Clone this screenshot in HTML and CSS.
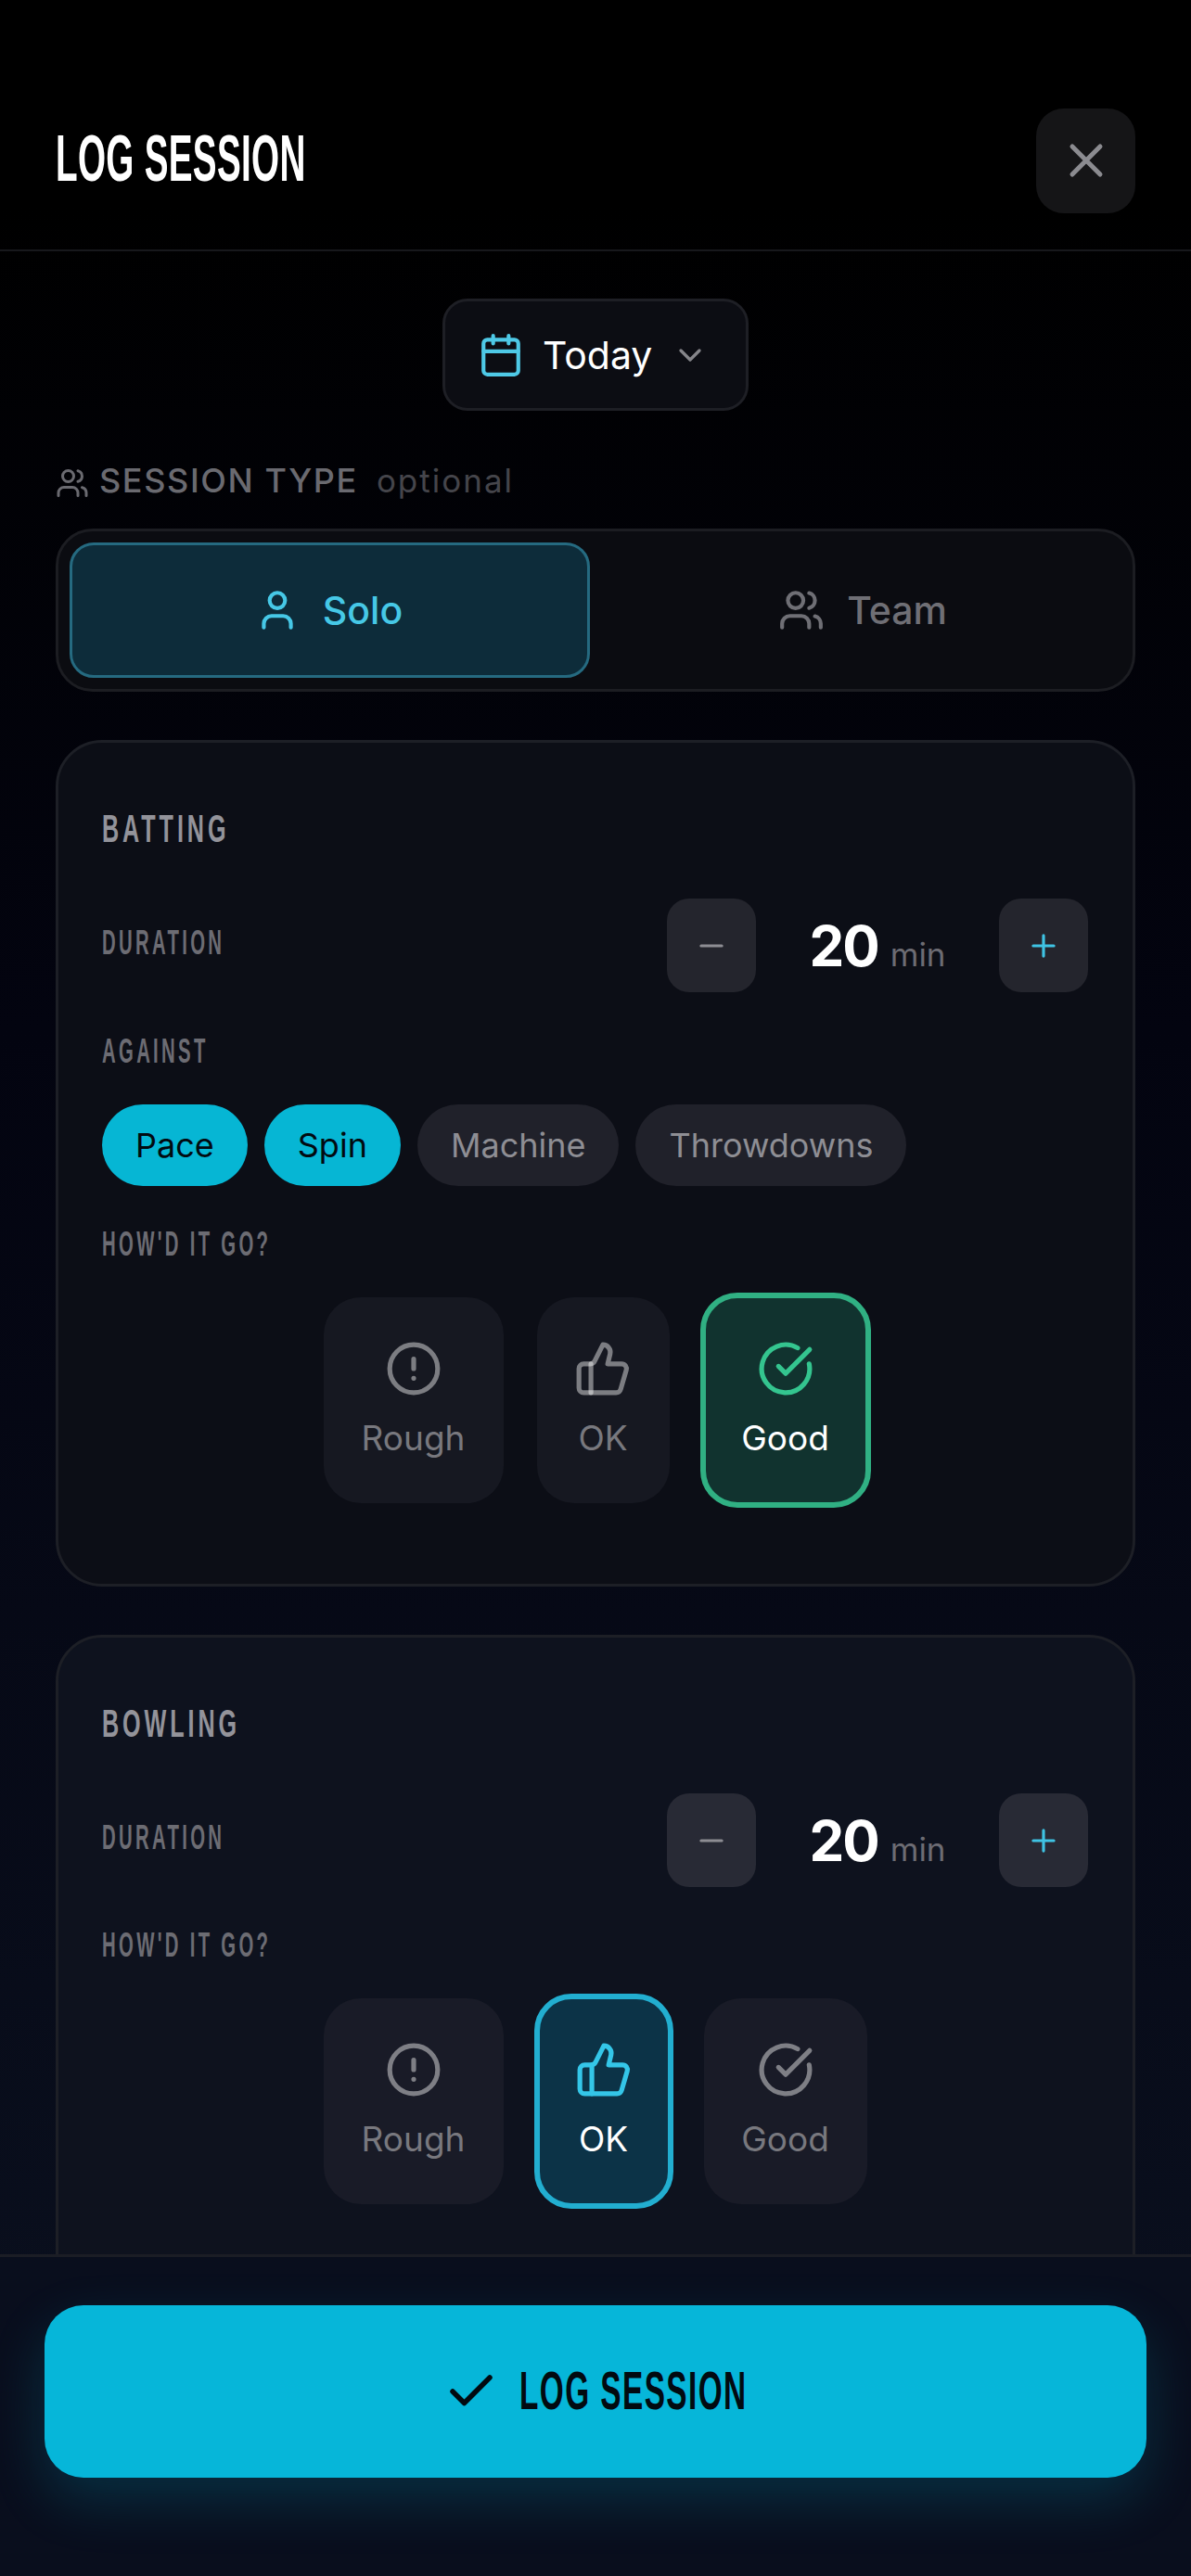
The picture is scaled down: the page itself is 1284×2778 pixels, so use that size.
FILE: index.html
```html
<!DOCTYPE html>
<html lang="en">
<head>
	<meta charset="UTF-8">
	<title>Log Session</title>
	<link rel="stylesheet" href="styles.css">
</head>
<body>
	<svg class="defs" width="0" height="0">
		<symbol id="i-x" viewBox="0 0 24 24"><path d="M18 6 6 18M6 6l12 12"/></symbol>
		<symbol id="i-cal" viewBox="0 0 24 24"><path d="M8 2v4M16 2v4M3 10h18"/><rect x="3" y="4" width="18" height="18" rx="2"/></symbol>
		<symbol id="i-chev" viewBox="0 0 24 24"><path d="m6 9 6 6 6-6"/></symbol>
		<symbol id="i-users" viewBox="0 0 24 24"><path d="M16 21v-2a4 4 0 0 0-4-4H6a4 4 0 0 0-4 4v2M16 3.128a4 4 0 0 1 0 7.744M22 21v-2a4 4 0 0 0-3-3.87"/><circle cx="9" cy="7" r="4"/></symbol>
		<symbol id="i-user" viewBox="0 0 24 24"><path d="M19 21v-2a4 4 0 0 0-4-4H9a4 4 0 0 0-4 4v2"/><circle cx="12" cy="7" r="4"/></symbol>
		<symbol id="i-alert" viewBox="0 0 24 24"><circle cx="12" cy="12" r="10"/><path d="M12 8v4M12 16h.01"/></symbol>
		<symbol id="i-thumb" viewBox="0 0 24 24"><path d="M7 10v12"/><path d="M15 5.88 14 10h5.83a2 2 0 0 1 1.92 2.56l-2.33 8A2 2 0 0 1 17.5 22H4a2 2 0 0 1-2-2v-8a2 2 0 0 1 2-2h2.76a2 2 0 0 0 1.79-1.11L12 2a3.13 3.13 0 0 1 3 3.88Z"/></symbol>
		<symbol id="i-good" viewBox="0 0 24 24"><path d="M21.801 10A10 10 0 1 1 17 3.335"/><path d="m9 11 3 3L22 4"/></symbol>
		<symbol id="i-check" viewBox="0 0 24 24"><path d="M20 6 9 17l-5-5"/></symbol>
		<symbol id="i-minus" viewBox="0 0 24 24"><path d="M5 12h14"/></symbol>
		<symbol id="i-plus" viewBox="0 0 24 24"><path d="M5 12h14M12 5v14"/></symbol>
	</svg>

	<div class="screen">
		<header class="top">
			<h1 class="title">LOG SESSION</h1>
			<button class="close"><svg class="ico ico-close"><use href="#i-x"/></svg></button>
		</header>

		<main class="scroll">
			<div class="date-wrap">
				<button class="date">
					<svg class="ico ico-cal"><use href="#i-cal"/></svg>
					<span class="date-txt">Today</span>
					<svg class="ico ico-chev"><use href="#i-chev"/></svg>
				</button>
			</div>

			<div class="type-label">
				<svg class="ico ico-small"><use href="#i-users"/></svg>
				<span class="type-name">SESSION TYPE</span>
				<span class="type-opt">optional</span>
			</div>

			<div class="segment">
				<button class="seg seg-on"><svg class="ico ico-seg"><use href="#i-user"/></svg>Solo</button>
				<button class="seg"><svg class="ico ico-seg"><use href="#i-users"/></svg>Team</button>
			</div>

			<section class="card">
				<h2 class="card-title"><span class="narrow">BATTING</span></h2>
				<div class="row">
					<span class="label"><span class="narrow">DURATION</span></span>
					<div class="stepper">
						<button class="step step-minus"><svg class="ico ico-step"><use href="#i-minus"/></svg></button>
						<div class="value"><b>20</b><span class="unit">min</span></div>
						<button class="step step-plus"><svg class="ico ico-step"><use href="#i-plus"/></svg></button>
					</div>
				</div>
				<div class="label label-against"><span class="narrow">AGAINST</span></div>
				<div class="chips">
					<span class="chip chip-on">Pace</span>
					<span class="chip chip-on">Spin</span>
					<span class="chip">Machine</span>
					<span class="chip">Throwdowns</span>
				</div>
				<div class="label label-how"><span class="narrow">HOW'D IT GO?</span></div>
				<div class="rating">
					<div class="rate rate-rough"><svg class="ico ico-rate"><use href="#i-alert"/></svg>Rough</div>
					<div class="rate rate-ok"><svg class="ico ico-rate"><use href="#i-thumb"/></svg>OK</div>
					<div class="rate rate-good on-green"><svg class="ico ico-rate"><use href="#i-good"/></svg>Good</div>
				</div>
			</section>

			<section class="card card-2">
				<h2 class="card-title"><span class="narrow">BOWLING</span></h2>
				<div class="row">
					<span class="label"><span class="narrow">DURATION</span></span>
					<div class="stepper">
						<button class="step step-minus"><svg class="ico ico-step"><use href="#i-minus"/></svg></button>
						<div class="value"><b>20</b><span class="unit">min</span></div>
						<button class="step step-plus"><svg class="ico ico-step"><use href="#i-plus"/></svg></button>
					</div>
				</div>
				<div class="label label-how"><span class="narrow">HOW'D IT GO?</span></div>
				<div class="rating">
					<div class="rate rate-rough"><svg class="ico ico-rate"><use href="#i-alert"/></svg>Rough</div>
					<div class="rate rate-ok on-cyan"><svg class="ico ico-rate"><use href="#i-thumb"/></svg>OK</div>
					<div class="rate rate-good"><svg class="ico ico-rate"><use href="#i-good"/></svg>Good</div>
				</div>
			</section>
		</main>

		<footer class="bottom">
			<button class="cta"><svg class="ico ico-cta"><use href="#i-check"/></svg><span class="cta-txt">LOG SESSION</span></button>
		</footer>
	</div>
</body>
</html>
```

FILE: styles.css
```css
*{
	margin:0;
	padding:0;
	box-sizing:border-box;
}
html,body{
	height:100%;
}
body{
	background:#000;
	color:#fff;
	font-family:Inter,"Liberation Sans",sans-serif;
	overflow:hidden;
}
button{
	border:0;
	background:none;
	color:inherit;
	font:inherit;
}
.defs{
	display:block;
	height:0;
}
.ico{
	display:block;
	flex:none;
	fill:none;
	stroke:currentColor;
	stroke-width:2;
	stroke-linecap:round;
	stroke-linejoin:round;
}
.screen{
	display:flex;
	flex-direction:column;
	height:2778px;
	background:linear-gradient(180deg,#000 0%,#000 8%,#030410 40%,#0b1120 100%);
}
/* no condensed face is installed, so squeeze the sans */
.narrow{
	display:inline-block;
	transform:scaleX(.55);
	transform-origin:left center;
	white-space:nowrap;
}

/* header */
.top{
	display:flex;
	flex:none;
	align-items:center;
	justify-content:space-between;
	height:271px;
	padding:77px 60px 0;
	border-bottom:2px solid #17181c;
}
.title{
	margin-top:-6px;
	font-family:"Liberation Sans",sans-serif;
	font-size:71px;
	font-weight:700;
	letter-spacing:.5px;
	transform:scaleX(.545);
	transform-origin:left center;
	white-space:nowrap;
}
.close{
	display:flex;
	align-items:center;
	justify-content:center;
	width:107px;
	height:113px;
	border-radius:30px;
	background:#151517;
	color:#8b8b90;
}
.ico-close{
	width:60px;
	height:60px;
}

/* scroll area */
.scroll{
	flex:1;
	min-height:0;
	overflow:hidden;
	padding:0 60px;
}
.date-wrap{
	display:flex;
	justify-content:center;
	padding-top:51px;
}
.date{
	display:flex;
	align-items:center;
	width:330px;
	height:121px;
	padding:0 35px;
	border:3px solid #1e1f25;
	border-radius:27px;
	background:#0c0d13;
}
.ico-cal{
	width:50px;
	height:50px;
	color:#4ec9e6;
}
.date-txt{
	margin-left:20px;
	font-size:41px;
}
.ico-chev{
	width:40px;
	height:40px;
	margin-left:21px;
	color:#85858a;
}
.type-label{
	display:flex;
	align-items:center;
	height:40px;
	margin-top:55px;
	color:#6a6a70;
}
.ico-small{
	width:36px;
	height:36px;
	margin-top:6px;
}
.type-name{
	margin-left:11px;
	font-size:36px;
	font-weight:500;
	letter-spacing:1.6px;
}
.type-opt{
	margin-left:20px;
	font-size:35px;
	letter-spacing:2px;
	color:#45454b;
}
.segment{
	display:flex;
	gap:18px;
	height:176px;
	margin-top:32px;
	padding:12px;
	border:3px solid #1c1d22;
	border-radius:40px;
	background:#0b0c11;
}
.seg{
	display:flex;
	flex:1;
	align-items:center;
	justify-content:center;
	gap:24px;
	padding-right:3px;
	border-radius:26px;
	font-size:41px;
	font-weight:500;
	color:#6f6f75;
}
.seg-on{
	border:3px solid #256a80;
	background:#0d2c3a;
	color:#46c8e6;
}
.ico-seg{
	width:50px;
	height:50px;
}

/* cards */
.card{
	margin-top:52px;
	padding:0 48px 0 47px;
	height:913px;
	border:3px solid #1d1f26;
	border-radius:50px;
	background:#0c0e16;
}
.card-2{
	height:760px;
	background:#0e121e;
}
.card-title{
	padding-top:71px;
	font-family:"Liberation Sans",sans-serif;
	font-size:42px;
	line-height:44px;
	font-weight:700;
	letter-spacing:6.5px;
	color:#93939a;
}
.card-title .narrow{
	transform:scaleX(.6);
}
.label{
	font-family:"Liberation Sans",sans-serif;
	font-size:37px;
	line-height:38px;
	font-weight:700;
	letter-spacing:6px;
	color:#6c6c73;
}
.row{
	display:flex;
	align-items:center;
	justify-content:space-between;
	margin-top:53px;
}
.row .label{
	margin-bottom:6px;
}
.stepper{
	display:flex;
	align-items:center;
	width:454px;
	justify-content:space-between;
}
.step{
	display:flex;
	align-items:center;
	justify-content:center;
	width:96px;
	height:101px;
	border-radius:24px;
	background:#24252d;
}
.card-2 .step{
	background:#282a35;
}
.step-minus{
	color:#8d8d93;
}
.step-plus{
	color:#3fc3e3;
}
.ico-step{
	width:38px;
	height:38px;
}
.value{
	display:flex;
	align-items:baseline;
	gap:13px;
}
.value b{
	font-size:60px;
	font-weight:700;
	letter-spacing:-2px;
}
.unit{
	font-size:35px;
	color:#6c6c73;
}
.label-against{
	margin-top:45px;
}
.chips{
	display:flex;
	gap:18px;
	margin-top:38px;
}
.chip{
	display:flex;
	align-items:center;
	height:88px;
	padding:0 36px;
	border-radius:44px;
	background:#20212a;
	font-size:36px;
	color:#8e8e94;
}
.chip-on{
	background:#06b6d4;
	color:#020a10;
}
.label-how{
	margin-top:44px;
}
.rating{
	display:flex;
	align-items:center;
	justify-content:center;
	gap:36px;
	margin-top:33px;
}
.rate{
	display:flex;
	flex-direction:column;
	align-items:center;
	justify-content:center;
	gap:21px;
	height:222px;
	padding-bottom:3px;
	border-radius:40px;
	background:#161821;
	font-size:37px;
	color:#78787e;
}
.card-2 .rate{
	background:#191b27;
}
.rate .ico{
	color:rgba(255,255,255,.44);
}
.rate-rough{
	width:194px;
}
.rate-ok{
	width:143px;
}
.rate-good{
	width:176px;
}
.ico-rate{
	width:62px;
	height:62px;
}
.on-green{
	width:184px;
	height:232px;
	margin:0 -4px 0 -3px;
	border:6px solid #30b083;
	background:#11332f;
	color:#fff;
}
.rate.on-green .ico{
	color:#34c58f;
}
.card-2 .on-cyan{
	width:150px;
	height:232px;
	margin:0 -3px;
	border:6px solid #22aed0;
	background:#0c3347;
	color:#fff;
}
.rate.on-cyan .ico{
	color:#34c6e8;
}

/* footer */
.bottom{
	flex:none;
	height:347px;
	padding:52px 48px 0;
	border-top:3px solid #1b1d25;
	background:#090e1d;
}
.cta{
	display:flex;
	align-items:center;
	justify-content:center;
	gap:22px;
	width:100%;
	height:186px;
	border-radius:42px;
	background:#06b6d9;
	color:#020a10;
	box-shadow:0 24px 60px rgba(6,182,217,.2);
}
.ico-cta{
	width:60px;
	height:60px;
	stroke-width:2.2;
}
.cta-txt{
	width:246px;
	margin-top:-4px;
	font-family:"Liberation Sans",sans-serif;
	font-size:58px;
	font-weight:700;
	letter-spacing:2.5px;
	text-align:left;
	white-space:nowrap;
	transform:scaleX(.575);
	transform-origin:left center;
}
```
